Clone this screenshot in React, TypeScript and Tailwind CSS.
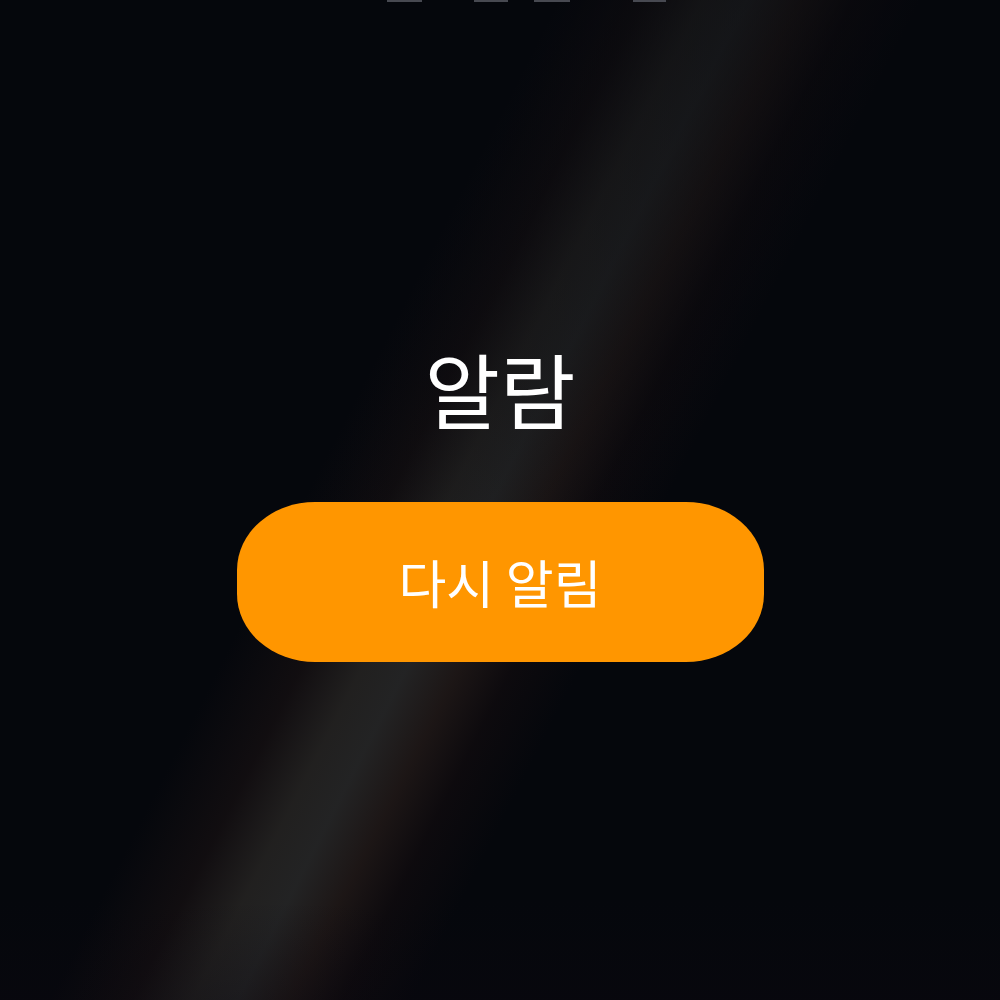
export default function App() {
  return (
    <div className="relative flex h-[1000px] w-[1000px] flex-col items-center overflow-hidden bg-[#05070c] font-['Noto_Sans_CJK_KR','Noto_Sans',sans-serif]">
      {/* diagonal light streak behind everything */}
      <div className="pointer-events-none absolute inset-0 bg-[linear-gradient(117deg,transparent_37%,rgba(40,26,24,0.35)_42.5%,rgba(40,38,36,0.8)_46.5%,rgba(40,40,40,0.85)_49.5%,rgba(44,32,28,0.6)_53%,rgba(32,18,18,0.3)_56.5%,transparent_61%)]" />
      <div className="pointer-events-none absolute inset-0 bg-[linear-gradient(to_bottom,rgba(5,7,12,0.5)_0%,rgba(5,7,12,0.3)_35%,transparent_62%,transparent_90%,rgba(12,8,16,0.3)_100%)]" />

      {/* bottoms of cut-off glyphs at the top edge */}
      <div className="relative flex h-[3px] w-full pl-[387px]">
        <div className="h-[2px] w-[35px] bg-[#474951]" />
        <div className="ml-[52px] h-[2px] w-[34px] bg-[#474951]" />
        <div className="ml-[26px] h-[2px] w-[36px] bg-[#474951]" />
        <div className="ml-[63px] h-[2px] w-[33px] bg-[#474951]" />
      </div>

      <h1 className="relative mt-[339px] text-[82px] leading-[92px] font-normal text-white">알람</h1>

      <button className="relative mt-[68px] flex h-[160px] w-[527px] items-center justify-center rounded-[78px/68px] bg-[#ff9600] text-[52px] font-normal text-white">
        다시 알림
      </button>
    </div>
  );
}
